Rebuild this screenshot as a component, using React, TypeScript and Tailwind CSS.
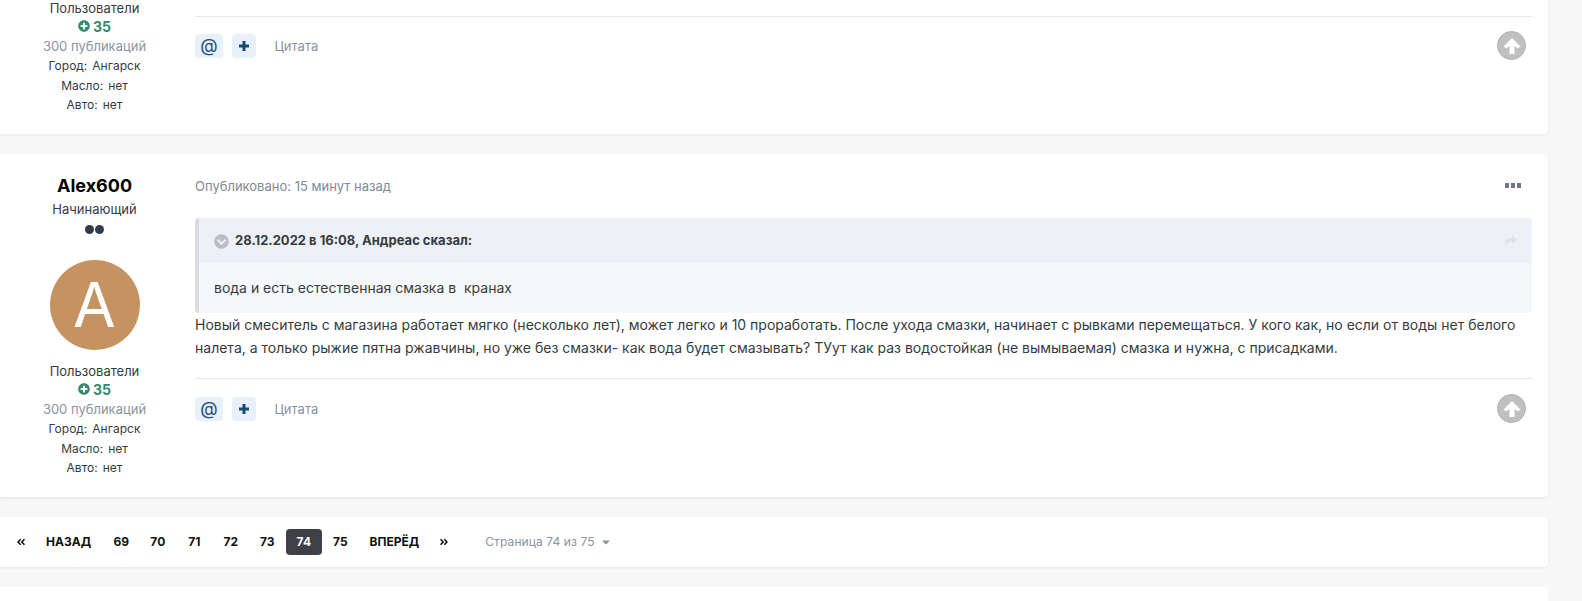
import { FaAngleDoubleLeft, FaAngleDoubleRight, FaCaretDown, FaChevronCircleDown, FaPlusCircle, FaShare } from "react-icons/fa";

const pages = ["69", "70", "71", "72", "73", "74", "75"];

function AuthorField({ label, value }: { label: string; value: string }) {
  return (
    <div className="flex h-[19.75px] items-center gap-[5px] text-[12px]">
      <span>{label}</span>
      <span>{value}</span>
    </div>
  );
}

function AuthorStats() {
  return (
    <div className="flex flex-col items-center text-[13px] text-[#353c41]">
      <div className="h-5 leading-5">Пользователи</div>
      <div className="flex h-4 items-center gap-[3px] text-[14px] font-bold text-[#358a68]">
        <FaPlusCircle className="h-3 w-3" />
        <span>35</span>
      </div>
      <div className="mt-[2px] h-5 leading-5 text-[#8a94a0]">300 публикаций</div>
      <AuthorField label="Город:" value="Ангарск" />
      <AuthorField label="Масло:" value="нет" />
      <AuthorField label="Авто:" value="нет" />
    </div>
  );
}

function PostActions() {
  return (
    <div className="flex items-center justify-between pt-[14px] pr-[6px]">
      <div className="flex items-center">
        <div className="flex h-6 w-7 items-center justify-center rounded bg-[#e8f1f9] text-[18px] leading-none text-[#1c4f77]">@</div>
        <div className="ml-[9px] flex h-6 w-6 items-center justify-center rounded bg-[#e8f1f9] text-[#164a72]">
          <svg viewBox="0 0 12 12" className="h-3 w-3" fill="currentColor">
            <path d="M4.5 1h3v3.5H11v3H7.5V11h-3V7.5H1v-3h3.5z" />
          </svg>
        </div>
        <span className="ml-[18.5px] pt-[2px] text-[13px] text-[#8a94a0]">Цитата</span>
      </div>
      <div className="flex h-[29px] w-[29px] items-center justify-center rounded-full border border-[#b0b0b0] bg-[#c0c0c0] text-white">
        <svg viewBox="0 0 20 20" className="h-5 w-5" fill="currentColor">
          <path d="M10 2 L18.5 10.5 L15.5 12.5 L12.5 9.8 V18 H7.5 V9.8 L4.5 12.5 L1.5 10.5 Z" />
        </svg>
      </div>
    </div>
  );
}

export default function App() {
  return (
    <div className="h-[601px] overflow-hidden bg-[#f7f7f7] pr-[34px] font-['Inter',sans-serif]">
      <div className="flex h-[134px] rounded-br bg-white shadow-[0_1px_3px_rgba(0,0,0,0.07)]">
        <div className="-mt-[2px] w-[195px] shrink-0 pr-[6px]">
          <AuthorStats />
        </div>
        <div className="flex-1 pt-4 pr-4">
          <div className="border-t border-[#e9e9e9]">
            <PostActions />
          </div>
        </div>
      </div>

      <div className="mt-5 flex h-[343px] rounded-r bg-white shadow-[0_1px_3px_rgba(0,0,0,0.07)]">
        <div className="flex w-[195px] shrink-0 flex-col items-center pt-[20px] pr-[6px]">
          <div className="h-6 text-[18px] leading-6 font-bold text-black">Alex600</div>
          <div className="mt-[1px] h-5 text-[13px] leading-5 text-[#353c41]">Начинающий</div>
          <div className="mt-[6px] flex gap-[1px]">
            <span className="h-[9px] w-[9px] rounded-full bg-[#323c48]" />
            <span className="h-[9px] w-[9px] rounded-full bg-[#323c48]" />
          </div>
          <div className="mt-[26px] mb-[11px] flex h-[90px] w-[90px] items-center justify-center rounded-full bg-[#c59362] text-[62px] leading-none text-white">A</div>
          <AuthorStats />
        </div>
        <div className="flex-1 pt-[22px] pr-4">
          <div className="flex items-center justify-between pr-[11px]">
            <span className="text-[13px] leading-[20px] text-[#808a96]">Опубликовано: 15 минут назад</span>
            <div className="mb-[2px] flex gap-[2px]">
              <span className="h-[5px] w-[4px] bg-[#6f7687]" />
              <span className="h-[5px] w-[4px] bg-[#6f7687]" />
              <span className="h-[5px] w-[4px] bg-[#6f7687]" />
            </div>
          </div>
          <div className="mt-[22px] overflow-hidden rounded border-l-4 border-[#d8dde4] bg-[#f5f8fb]">
            <div className="flex h-[45px] items-center justify-between bg-[#edf1f5] px-[15px] pt-[1px] text-[13px] font-bold text-[#353c41]">
              <div className="flex items-center gap-[6px]">
                <FaChevronCircleDown className="h-[15px] w-[15px] text-[#b9bdc2]" />
                <span>28.12.2022 в 16:08, Андреас сказал:</span>
              </div>
              <FaShare className="h-3 w-3 text-[#dfe3e8]" />
            </div>
            <div className="flex h-[50px] items-center pb-[2px] pl-[15px] text-[14px] whitespace-pre text-[#353c41]">вода и есть естественная смазка в  кранах</div>
          </div>
          <div className="text-[14px] leading-[23px] text-[#353c41]">
            Новый смеситель с магазина работает мягко (несколько лет), может легко и 10 проработать. После ухода смазки, начинает с рывками перемещаться. У кого как, но если от воды нет белого налета, а только рыжие пятна ржавчины, но уже без смазки- как вода будет смазывать? ТУут как раз водостойкая (не вымываемая) смазка и нужна, с присадками.
          </div>
          <div className="mt-[19px] border-t border-[#e9e9e9] pt-[1px]">
            <PostActions />
          </div>
        </div>
      </div>

      <div className="mt-5 flex h-[50px] items-center rounded-r bg-white pl-4 text-[12px] font-bold text-[#111] shadow-[0_1px_3px_rgba(0,0,0,0.07)]">
        <FaAngleDoubleLeft className="h-[10px] w-[10px]" />
        <span className="ml-[20px]">НАЗАД</span>
        <div className="ml-[12px] flex items-center">
          {pages.map((p) => (
            <span key={p} className={p === "74" ? "flex h-[26px] w-[36.5px] items-center justify-center rounded bg-[#3d4047] text-white" : "flex h-[26px] w-[36.5px] items-center justify-center"}>
              {p}
            </span>
          ))}
        </div>
        <span className="ml-[11px]">ВПЕРЁД</span>
        <FaAngleDoubleRight className="ml-[20px] h-[10px] w-[10px]" />
        <span className="ml-[36px] text-[12px] font-normal tracking-[0.1px] text-[#8a94a0]">Страница 74 из 75</span>
        <FaCaretDown className="ml-[5px] h-3 w-3 text-[#8a94a0]" />
      </div>

      <div className="mt-5 h-20 bg-white" />
    </div>
  );
}
